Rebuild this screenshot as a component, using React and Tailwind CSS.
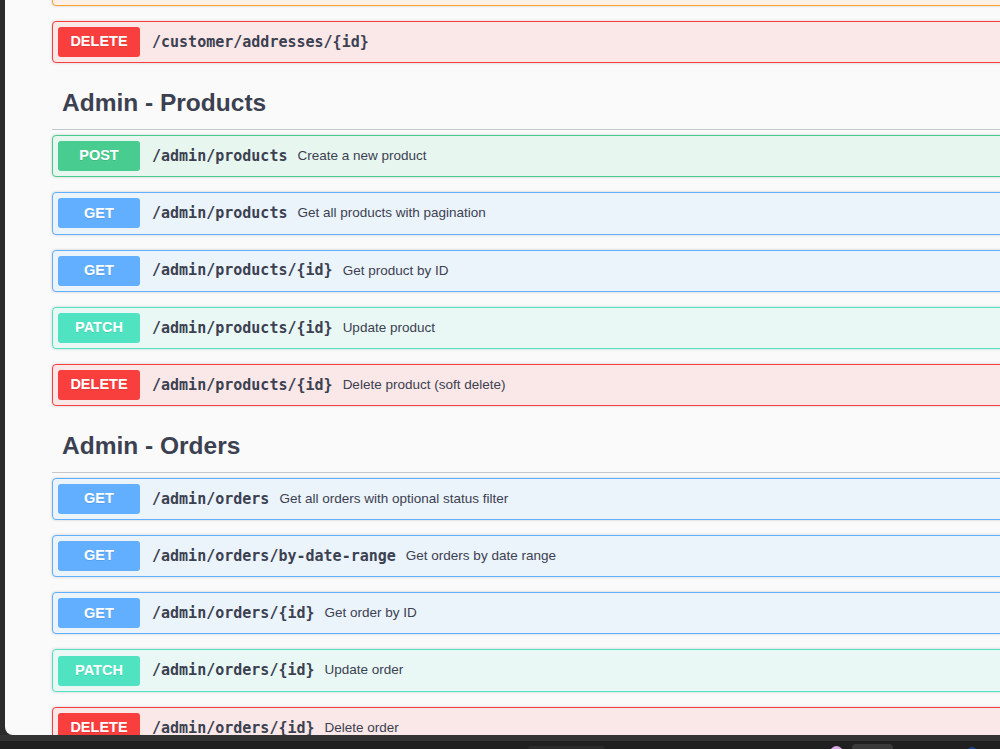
import React from "react";

const METHODS = {
  GET: { box: "bg-[#ebf3fb] border-[#61affe]", badge: "bg-[#61affe]" },
  POST: { box: "bg-[#e8f6f0] border-[#49cc90]", badge: "bg-[#49cc90]" },
  PUT: { box: "bg-[#fbf1e6] border-[#fca130]", badge: "bg-[#fca130]" },
  PATCH: { box: "bg-[#e9f8f5] border-[#50e3c2]", badge: "bg-[#50e3c2]" },
  DELETE: { box: "bg-[#fae7e7] border-[#f93e3e]", badge: "bg-[#f93e3e]" },
};

const sections = [
  {
    title: "Admin - Products",
    ops: [
      ["POST", "/admin/products", "Create a new product"],
      ["GET", "/admin/products", "Get all products with pagination"],
      ["GET", "/admin/products/{id}", "Get product by ID"],
      ["PATCH", "/admin/products/{id}", "Update product"],
      ["DELETE", "/admin/products/{id}", "Delete product (soft delete)"],
    ],
  },
  {
    title: "Admin - Orders",
    ops: [
      ["GET", "/admin/orders", "Get all orders with optional status filter"],
      ["GET", "/admin/orders/by-date-range", "Get orders by date range"],
      ["GET", "/admin/orders/{id}", "Get order by ID"],
      ["PATCH", "/admin/orders/{id}", "Update order"],
      ["DELETE", "/admin/orders/{id}", "Delete order"],
    ],
  },
];

const sans = { fontFamily: '"Liberation Sans", Arial, sans-serif' };

const Operation = ({ method, path, desc, className = "" }) => {
  const m = METHODS[method];
  return (
    <div
      className={`flex items-center h-[42.2px] mb-[15px] px-[5px] border rounded-[4px] shadow-[0_0_3px_rgba(0,0,0,0.19)] ${m.box} ${className}`}
    >
      {/* scrolled-away block only shows its bottom edge */}
      {path && (
        <>
          <span
            className={`w-[82px] h-[30px] shrink-0 flex items-center justify-center rounded-[3px] text-white text-[14.5px] font-bold [text-shadow:0_1px_0_rgba(0,0,0,0.1)] ${m.badge}`}
            style={sans}
          >
            {method}
          </span>
          <span
            className="pl-[12px] pr-[10px] text-[15px] font-bold text-[#3b4151] whitespace-nowrap"
            style={{ fontFamily: '"DejaVu Sans Mono", monospace' }}
          >
            {path}
          </span>
        </>
      )}
      {desc && (
        <span className="text-[13.5px] text-[#3b4151] whitespace-nowrap" style={sans}>
          {desc}
        </span>
      )}
    </div>
  );
};

export default function App() {
  return (
    <div className="w-[1000px] h-[749px] flex flex-col bg-[#222222] overflow-hidden">
      {/* swagger page */}
      <div className="flex flex-1 bg-[#2c2c2c]">
        <div className="w-[5px] shrink-0" />
        <div className="flex-1 h-[735px] bg-[#fafafa] rounded-bl-[8px] overflow-hidden">
          <div className="w-[1040px] pl-[47px]">
            <Operation method="PUT" className="mt-[-36px]" />
            <Operation method="DELETE" path="/customer/addresses/{id}" />

            {sections.map((s) => (
              <div key={s.title}>
                <h3
                  className="h-[51.8px] flex items-center pl-[10px] mb-[5px] border-b border-[#c4c6cb] text-[24.5px] font-bold text-[#3b4151]"
                  style={sans}
                >
                  {s.title}
                </h3>
                {s.ops.map(([method, path, desc], i) => (
                  <Operation key={i} method={method} path={path} desc={desc} />
                ))}
              </div>
            ))}
          </div>
        </div>
      </div>

      {/* taskbar edge */}
      <div className="h-[6px] bg-[#333333]" />
      <div className="h-[8px] bg-[#202020] relative">
        <div className="absolute left-[528px] top-[5px] w-[77px] h-[3px] rounded-t-[3px] bg-[#2a2a2a]" />
        <div className="absolute left-[830px] top-[5px] w-[13px] h-[13px] rounded-full bg-[#d9a6e6]" />
        <div className="absolute left-[852px] top-[3px] w-[41px] h-[10px] rounded-[4px] bg-[#3a3a3a]" />
        <div className="absolute left-[967px] top-[6px] w-[10px] h-[10px] rounded-full bg-[#1c3f8a]" />
      </div>
    </div>
  );
}
